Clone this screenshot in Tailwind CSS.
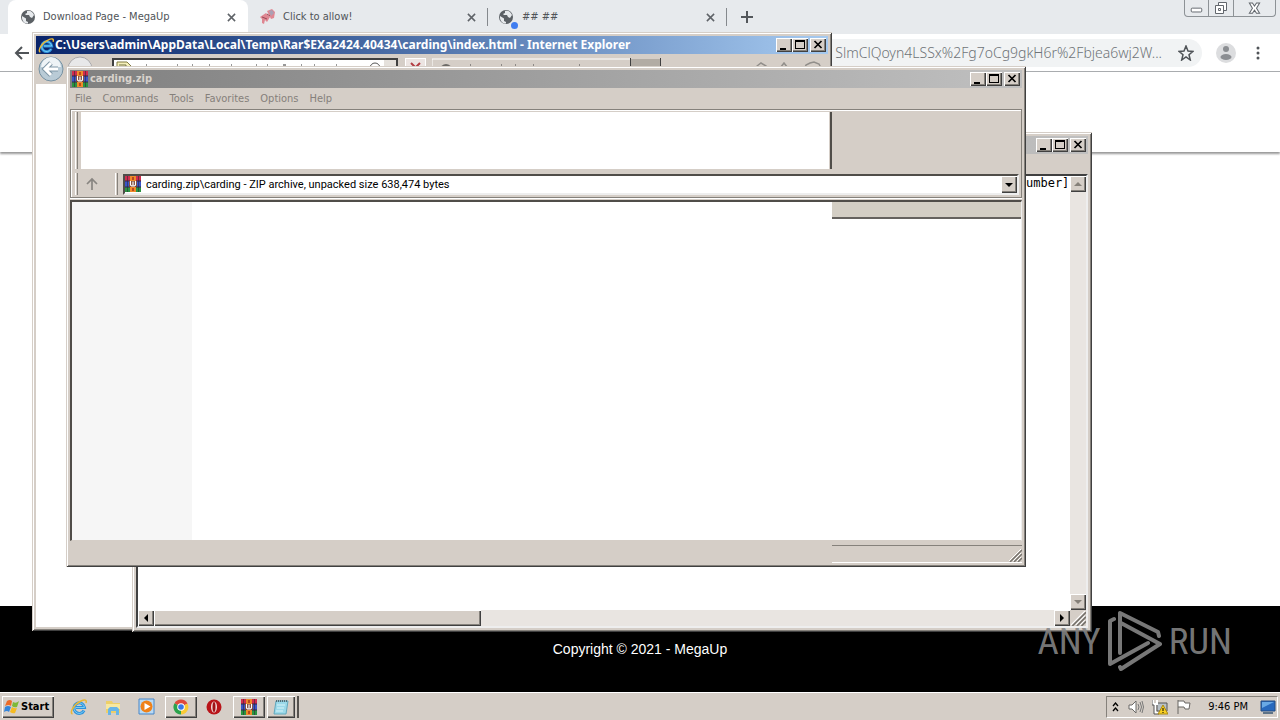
<!DOCTYPE html>
<html lang="en">
<head>
<meta charset="utf-8">
<title>Desktop</title>
<script src="https://cdn.jsdelivr.net/npm/@tailwindcss/browser@4"></script>
</head>
<body class="h-screen overflow-hidden bg-white font-['DejaVu_Sans_Condensed','DejaVu_Sans',sans-serif] text-[11px] leading-4 text-black">
<svg class="hidden" xmlns="http://www.w3.org/2000/svg">
  <symbol id="globe" viewBox="0 0 16 16"><circle cx="8" cy="8" r="7" fill="#5b6065"/><path d="M2 7l4 2.500V12l2 1v1.500C4 15 1.500 11 2 7zM7 2c3-1 6 1 7 4l-2 3-2-1-1-2H6l-1-1 2-1z" fill="#e7eaed"/></symbol>
  <symbol id="x" viewBox="0 0 10 10"><path d="M1 1l8 8M9 1L1 9" stroke="#5f6368" stroke-width="1.700"/></symbol>
  <symbol id="min" viewBox="0 0 16 14"><path d="M4 10h6v2H4z"/></symbol>
  <symbol id="max" viewBox="0 0 16 14"><path d="M3 2h10v9H3zM4 4v6h8V4z" fill-rule="evenodd"/></symbol>
  <symbol id="close" viewBox="0 0 16 14"><path d="M4.500 3l7 7M11.500 3l-7 7" stroke="#000" stroke-width="1.700"/></symbol>
  <symbol id="ie" viewBox="0 0 18 18"><path d="M14 12.500A5.300 5.300 0 1 1 14.500 9.500H6" fill="none" stroke="#2d91dc" stroke-width="3"/><path d="M14 12.500A5.300 5.300 0 1 1 14.500 9.500H6" fill="none" stroke="#79cff5" stroke-width="1"/><path d="M2.500 16C-1 15 4 6 11 3c4-2 6-1 5 2" fill="none" stroke="#e9b735" stroke-width="1.500"/></symbol>
  <symbol id="rar" viewBox="0 0 16 16"><path fill="#d02c4c" d="M0 0h16v5H0z"/><path fill="#3a55c8" d="M0 5h16v6H0z"/><path fill="#2a9440" d="M0 11h16v5H0z"/><path d="M0 5h5M11 5h5M0 11h5M11 11h5" stroke="#33294a"/><path fill="#f08a2a" d="M5 0h6v16H5z"/><path fill="#b8481f" d="M7 1h2v3H7zM7 12h2v3H7z"/><path fill="#7a4434" d="M4 5h8v6H4z"/><path d="M5.500 5v4l1 1h3l1-1V5M8 5.500v4" fill="none" stroke="#fff" stroke-width="1.200"/><path d="M2.500 0v16M13.500 0v16" stroke="#2c2538" stroke-opacity=".55"/></symbol>
  <symbol id="grip" viewBox="0 0 14 14"><path d="M1 13L13 1M5 13l8-8M9 13l4-4" stroke="#fff" stroke-width="1"/><path d="M2 14L14 2M6 14l8-8M10 14l4-4" stroke="#77736d" stroke-width="1.500"/></symbol>
</svg>

<div class="relative flex h-full flex-col">
  <!-- Browser tab strip -->
  <header class="flex h-[34px] shrink-0 bg-[#e7eaed] pl-2 text-[#505458]">
    <div class="flex w-60 items-center rounded-t-lg bg-white pr-3 pl-3">
      <svg class="size-4"><use href="#globe"/></svg><a href="#" class="ml-[7px] flex-1">Download Page - MegaUp</a>
      <button aria-label="Close tab" class="size-[9px]"><svg class="size-full"><use href="#x"/></svg></button>
    </div>
    <div class="flex w-[239px] items-center pr-[11px] pl-3">
      <svg class="size-4" viewBox="0 0 16 16"><path fill="#df8792" d="M0 8l6-4 4 4-3 5-2-2-1 4-2-1v-4zM7 2l5-2 3 3-1 6-3 1z"/><path fill="#aaa0b4" d="M9 2l3-1 2 3-3 3z"/><path d="M2 8l5 2M7 5l3 2" stroke="#9a4856"/></svg>
      <a href="#" class="ml-[7px] flex-1">Click to allow!</a>
      <button aria-label="Close tab" class="size-[9px]"><svg class="size-full"><use href="#x"/></svg></button>
    </div>
    <div class="my-2 flex w-[240px] items-center border-x border-[#85898d] pr-[11px] pl-[10px]">
      <div class="relative size-4"><svg class="size-4"><use href="#globe"/></svg><span class="absolute -right-1 -bottom-1 size-[7px] rounded-full bg-[#3f7df0]"></span></div>
      <a href="#" class="ml-2 flex-1">## ##</a>
      <button aria-label="Close tab" class="size-[9px]"><svg class="size-full"><use href="#x"/></svg></button>
    </div>
    <button aria-label="New tab" class="ml-[14px] w-3"><svg class="size-3" viewBox="0 0 12 12"><path d="M6 0v12M0 6h12" stroke="#53575b" stroke-width="2"/></svg></button>
    <div class="mr-[4px] ml-auto flex h-[17px] rounded-b border border-t-0 border-[#8d9296]">
      <button aria-label="Minimize" class="w-6 border-r border-[#8d9296]"><svg viewBox="0 0 24 16"><rect x="6.500" y="8.500" width="11" height="4" rx="1" fill="#fff" stroke="#62676d"/></svg></button>
      <button aria-label="Restore" class="w-[25px] border-r border-[#8d9296]"><svg viewBox="0 0 24 16"><path d="M9.500 5V2.500h8v8H15M6.500 5.500h8v8h-8zM9.500 8.500h2v2h-2z" fill="#fff" stroke="#62676d"/></svg></button>
      <button aria-label="Close" class="w-[41px]"><svg viewBox="0 0 40 16"><path d="M15 3h3l2 3 2-3h3l-3 5 3 5h-3l-2-3-2 3h-3l3-5z" fill="#fff" stroke="#62676d"/></svg></button>
    </div>
  </header>
  <!-- Address bar -->
  <div class="flex h-[38px] shrink-0 items-center border-b border-[#a9acaf] bg-white px-[14px]">
    <button aria-label="Back" class="size-4"><svg viewBox="0 0 16 16"><path d="M15 8H2M8 2L2 8l6 6" fill="none" stroke="#505458" stroke-width="2"/></svg></button>
    <div class="ml-4 flex h-[28px] flex-1 items-center rounded-full bg-[#f1f3f4] pr-[8px]">
      <input aria-label="Address" class="min-w-0 flex-1 bg-transparent text-right font-['Noto_Sans',sans-serif] text-[14px] font-light text-[#6f7478]" value="SlmClQoyn4LSSx%2Fg7oCg9gkH6r%2Fbjea6wj2W...">
      <button aria-label="Bookmark" class="ml-4 size-4"><svg viewBox="0 0 16 16"><path d="M8 1l2 5 5 .4-4 3.300L12.300 15 8 12l-4.300 3L5 9.700 1 6.400 6 6z" fill="none" stroke="#505458" stroke-width="1.500"/></svg></button>
    </div>
    <button aria-label="Profile" class="ml-[14px] size-5"><svg viewBox="0 0 20 20"><circle cx="10" cy="10" r="10" fill="#dcdddf"/><circle cx="10" cy="6" r="3" fill="#8b8e92"/><ellipse cx="10" cy="14" rx="5.500" ry="3" fill="#8b8e92"/></svg></button>
    <button aria-label="Menu" class="ml-[14px] flex w-4 justify-center"><svg class="h-4 w-1" viewBox="0 0 4 16"><circle cx="2" cy="3" r="1.500" fill="#505458"/><circle cx="2" cy="8" r="1.500" fill="#505458"/><circle cx="2" cy="13" r="1.500" fill="#505458"/></svg></button>
  </div>
  <!-- Web page -->
  <main class="flex min-h-0 flex-1 flex-col">
    <div class="h-20 shrink-0 bg-white shadow-[0_2px_2px_#999]"></div>
    <footer class="mt-auto h-[86px] bg-black text-center font-['Liberation_Sans',sans-serif] text-[14px] leading-[86px] text-white">Copyright © 2021 - MegaUp</footer>
  </main>

  <!-- Internet Explorer window -->
  <section class="absolute top-8 left-8 flex h-[599px] w-[800px] flex-col bg-[#d5cec7] p-1 shadow-[inset_1px_1px_0_#d5cec7,inset_-1px_-1px_0_#404040,inset_2px_2px_0_#fff,inset_-2px_-2px_0_#85817b]">
    <div class="flex h-[18px] shrink-0 items-center bg-linear-to-r from-[#0a246a] to-[#a6caf0] pr-[2px] pl-[2px] text-white">
      <svg class="size-[17px]"><use href="#ie"/></svg><h2 class="flex-1 font-['Noto_Sans',sans-serif] text-[12px] font-bold whitespace-nowrap">C:\Users\admin\AppData\Local\Temp\Rar$EXa2424.40434\carding\index.html - Internet Explorer</h2>
      <button aria-label="Minimize" class="h-[14px] w-4 bg-[#d5cec7] shadow-[inset_1px_1px_0_#fff,inset_-1px_-1px_0_#404040,inset_-2px_-2px_0_#85817b]"><svg viewBox="0 0 16 14"><use href="#min"/></svg></button>
      <button aria-label="Maximize" class="h-[14px] w-4 bg-[#d5cec7] shadow-[inset_1px_1px_0_#fff,inset_-1px_-1px_0_#404040,inset_-2px_-2px_0_#85817b]"><svg viewBox="0 0 16 14"><use href="#max"/></svg></button>
      <button aria-label="Close" class="ml-[2px] h-[14px] w-4 bg-[#d5cec7] shadow-[inset_1px_1px_0_#fff,inset_-1px_-1px_0_#404040,inset_-2px_-2px_0_#85817b]"><svg viewBox="0 0 16 14"><use href="#close"/></svg></button>
    </div>
    <div class="flex h-[30px] shrink-0 items-start pl-[2px]">
      <svg class="mt-[2px] h-7 w-[74px]" viewBox="0 0 74 28"><circle cx="42" cy="13" r="12" fill="#e8e8e9" stroke="#aaa9ab"/><circle cx="13" cy="13" r="12" fill="#b9cbd6" stroke="#7691a2"/><path d="M3 11a10 10 0 0 1 20 0z" fill="#eef3f6"/><path d="M20 13H7M13 7l-6 6 6 6" fill="none" stroke="#7d95a5" stroke-width="5"/><path d="M20 13H7M13 7l-6 6 6 6" fill="none" stroke="#fff" stroke-width="3"/></svg>
      <div class="mt-1 flex h-6 w-[286px] border-2 border-[#404040] bg-white"><svg class="size-full" viewBox="0 0 282 20" preserveAspectRatio="none"><path d="M3 2h10l4 4v12H3z" fill="#f4efb9" stroke="#817a42"/><path d="M5 5h7v3h5" fill="none" stroke="#716e45"/><path d="M32 5h1M63 5h1M78 5h1M95 5h1M117 5h1M142 5h1M153 5h1M169 5h3M187 5h1M200 5h1M222 5h1" stroke="#333"/><circle cx="261" cy="8" r="5" fill="none" stroke="#555"/><path d="M270 0h12v20h-12z" fill="#e5e1dc"/></svg></div>
      <div class="mt-1 ml-[7px] h-6 w-[21px] border border-white bg-[#ece5e2]"><svg viewBox="0 0 19 20"><path d="M5 4l9 9M14 4l-9 9" stroke="#b33e43" stroke-width="2"/></svg></div>
      <svg class="mt-1 ml-[6px] h-6 w-[230px]" viewBox="0 0 230 24"><path d="M0 24V1h198" fill="none" stroke="#fff"/><path d="M198.500 0v24M228.500 0v24" stroke="#404040"/><path d="M199 1h29v23h-29z" fill="#b2aca4"/><circle cx="14" cy="12" r="6" fill="#6d6b68"/><path d="M38 7h1M69 7h1M83 7h1M101 7h1M147 7h1" stroke="#444"/></svg>
      <svg class="mt-1 ml-[92px] h-6 w-[70px]" viewBox="0 0 70 24"><path d="M3 14V8l4-3 5 3v6M23 14l7-9 7 9M50 12l2-5 4-2 4-1 5 2 3 6" fill="none" stroke="#918e8a" stroke-width="1.500"/></svg>
    </div>
    <div class="flex-1 bg-white"></div>
  </section>

  <!-- Notepad window -->
  <section class="absolute top-[132px] left-[132px] flex h-[500px] w-[960px] flex-col bg-[#d5cec7] p-1 shadow-[inset_1px_1px_0_#d5cec7,inset_-1px_-1px_0_#404040,inset_2px_2px_0_#fff,inset_-2px_-2px_0_#85817b]">
    <div class="flex h-[18px] shrink-0 items-center justify-end bg-linear-to-r from-[#808080] to-[#c0c0c0] pr-[2px]">
      <button aria-label="Minimize" class="h-[14px] w-4 bg-[#d5cec7] shadow-[inset_1px_1px_0_#fff,inset_-1px_-1px_0_#404040,inset_-2px_-2px_0_#85817b]"><svg viewBox="0 0 16 14"><use href="#min"/></svg></button>
      <button aria-label="Maximize" class="h-[14px] w-4 bg-[#d5cec7] shadow-[inset_1px_1px_0_#fff,inset_-1px_-1px_0_#404040,inset_-2px_-2px_0_#85817b]"><svg viewBox="0 0 16 14"><use href="#max"/></svg></button>
      <button aria-label="Close" class="ml-[2px] h-[14px] w-4 bg-[#d5cec7] shadow-[inset_1px_1px_0_#fff,inset_-1px_-1px_0_#404040,inset_-2px_-2px_0_#85817b]"><svg viewBox="0 0 16 14"><use href="#close"/></svg></button>
    </div>
    <div class="mt-5 flex min-h-0 flex-1 flex-col border-2 border-t-[#404040] border-r-[#eee] border-b-[#eee] border-l-[#404040] bg-white">
      <div class="flex min-h-0 flex-1">
        <textarea aria-label="Text" class="min-w-0 flex-1 resize-none overflow-hidden bg-white pl-[888px] font-['DejaVu_Sans_Mono',monospace] text-[12px] leading-[14px] whitespace-pre">umber]</textarea>
        <div class="flex w-4 flex-col justify-between bg-[#e9e5e1]">
          <button aria-label="Scroll up" class="size-4 bg-[#d5cec7] shadow-[inset_1px_1px_0_#fff,inset_-1px_-1px_0_#404040,inset_-2px_-2px_0_#85817b]"><svg viewBox="0 0 16 16"><path d="M4 10h8L8 6z" fill="#858079"/></svg></button>
          <button aria-label="Scroll down" class="size-4 bg-[#d5cec7] shadow-[inset_1px_1px_0_#fff,inset_-1px_-1px_0_#404040,inset_-2px_-2px_0_#85817b]"><svg viewBox="0 0 16 16"><path d="M4 6h8l-4 4z" fill="#858079"/></svg></button>
        </div>
      </div>
      <div class="flex h-4 bg-[#e9e5e1]">
        <button aria-label="Scroll left" class="size-4 bg-[#d5cec7] shadow-[inset_1px_1px_0_#fff,inset_-1px_-1px_0_#404040,inset_-2px_-2px_0_#85817b]"><svg viewBox="0 0 16 16"><path d="M10 4v8L6 8z"/></svg></button>
        <div class="w-[327px] bg-[#d5cec7] shadow-[inset_1px_1px_0_#fff,inset_-1px_-1px_0_#404040,inset_-2px_-2px_0_#85817b]"></div>
        <button aria-label="Scroll right" class="ml-auto size-4 bg-[#d5cec7] shadow-[inset_1px_1px_0_#fff,inset_-1px_-1px_0_#404040,inset_-2px_-2px_0_#85817b]"><svg viewBox="0 0 16 16"><path d="M6 4v8l4-4z"/></svg></button>
        <svg class="size-4 bg-[#d5cec7]"><use href="#grip"/></svg>
      </div>
    </div>
  </section>

  <!-- WinRAR window -->
  <section class="absolute top-[66px] left-[66px] flex h-[501px] w-[960px] flex-col bg-[#d5cec7] p-1 shadow-[inset_1px_1px_0_#d5cec7,inset_-1px_-1px_0_#404040,inset_2px_2px_0_#fff,inset_-2px_-2px_0_#85817b]">
    <div class="flex h-[18px] shrink-0 items-center bg-linear-to-r from-[#808080] to-[#c0c0c0] pr-[2px] pl-[2px] text-[#d9d3cd]">
      <svg class="size-4"><use href="#rar"/></svg><h2 class="ml-[2px] flex-1 font-bold">carding.zip</h2>
      <button aria-label="Minimize" class="h-[14px] w-4 bg-[#d5cec7] shadow-[inset_1px_1px_0_#fff,inset_-1px_-1px_0_#404040,inset_-2px_-2px_0_#85817b]"><svg viewBox="0 0 16 14"><use href="#min"/></svg></button>
      <button aria-label="Maximize" class="h-[14px] w-4 bg-[#d5cec7] shadow-[inset_1px_1px_0_#fff,inset_-1px_-1px_0_#404040,inset_-2px_-2px_0_#85817b]"><svg viewBox="0 0 16 14"><use href="#max"/></svg></button>
      <button aria-label="Close" class="ml-[2px] h-[14px] w-4 bg-[#d5cec7] shadow-[inset_1px_1px_0_#fff,inset_-1px_-1px_0_#404040,inset_-2px_-2px_0_#85817b]"><svg viewBox="0 0 16 14"><use href="#close"/></svg></button>
    </div>
    <nav class="flex h-[21px] shrink-0 items-center gap-[11px] pt-px pl-[5px] text-[#85807b]"><button>File</button><button>Commands</button><button>Tools</button><button>Favorites</button><button>Options</button><button>Help</button></nav>
    <div class="flex h-[89px] shrink-0 flex-col border border-[#85817b] p-[2px] shadow-[inset_1px_1px_0_#fff,0_1px_0_#fff]">
      <div class="flex h-[57px] pl-[2px]">
        <div class="w-[3px] border-r border-l border-r-[#85817b] border-l-white"></div>
        <div class="ml-[3px] w-[748px] bg-white"></div><div class="w-[3px] border-r-2 border-[#504d49]"></div>
      </div>
      <div class="mt-1 flex h-[22px] items-center pl-[2px]">
        <div class="h-full w-[3px] border-r border-l border-r-[#85817b] border-l-white"></div>
        <button aria-label="Up one level" class="ml-[7px] size-[14px]"><svg viewBox="0 0 14 14"><path d="M7 13V2M2 7l5-5 5 5" fill="none" stroke="#888581" stroke-width="1.700"/></svg></button>
        <div class="ml-[16px] h-full w-[3px] border-r border-l border-r-[#85817b] border-l-white"></div>
        <div class="ml-[5px] flex h-[21px] flex-1 items-center border-2 border-t-[#504d49] border-r-[#eee] border-b-[#eee] border-l-[#504d49] bg-white">
          <svg class="size-4"><use href="#rar"/></svg>
          <select aria-label="Archive path" class="ml-[5px] h-[17px] flex-1 appearance-none bg-white pt-px font-['Roboto',sans-serif]"><option>carding.zip\carding - ZIP archive, unpacked size 638,474 bytes</option></select>
          <svg class="h-[17px] w-4 bg-[#d5cec7] shadow-[inset_1px_1px_0_#fff,inset_-1px_-1px_0_#404040,inset_-2px_-2px_0_#85817b]" viewBox="0 0 16 17"><path d="M4 7h8l-4 4z"/></svg>
        </div>
      </div>
    </div>
    <div class="mt-[2px] flex min-h-0 flex-1 border-t-2 border-r border-b border-l-2 border-t-[#504d49] border-r-[#eee] border-b-[#d5cec7] border-l-[#504d49] bg-white">
      <div class="w-[120px] bg-[#f6f6f6]"></div>
      <div class="ml-auto h-[17px] w-[189px] border-b-2 border-[#65625e] bg-[#d3cec4]"></div>
    </div>
    <div class="mt-1 flex h-[18px] shrink-0 justify-end">
      <div class="flex w-[190px] items-end justify-end border-t border-b border-t-[#85817b] border-b-white"><svg class="size-[14px]"><use href="#grip"/></svg></div>
    </div>
  </section>

  <!-- Watermark over the desktop -->
  <div class="absolute right-[48px] bottom-[47px] flex h-[64px] items-center gap-[7px] font-['Roboto_Condensed',sans-serif] text-[37px] leading-none text-[#858585]/90">
    <span>ANY</span>
    <svg class="h-[62px] w-[54px]" viewBox="0 0 54 62" fill="none" stroke="currentColor" stroke-width="4" stroke-linecap="round" stroke-linejoin="round"><path d="M51 26L50 22 12 3V43M6 9L2 11V54L40 33M12 57l1 2L52 34 13 13"/></svg>
    <span>RUN</span>
  </div>

  <!-- Taskbar -->
  <nav class="relative flex h-7 shrink-0 items-center border-t border-white bg-[#d5cec7] pr-[2px] pl-[2px]">
    <button class="flex h-[22px] w-[52px] items-center gap-[1px] pl-[2px] font-bold shadow-[inset_1px_1px_0_#fff,inset_-1px_-1px_0_#404040,inset_-2px_-2px_0_#85817b]">
      <svg class="size-4 shrink-0" viewBox="0 0 16 16"><path d="M3 2q3-2 5 0L7 7Q5 5 1 7z" fill="#ed6b27"/><path d="M9 3q3 2 6-1l-2 6q-3 1-5-1z" fill="#7db937"/><path d="M1 8q3-2 6 0l-2 5q-2-2-5 0z" fill="#3585da"/><path d="M8 8q3 2 5 1l-2 5q-2 1-5-1z" fill="#f5bb22"/></svg>Start</button>
    <button aria-label="Internet Explorer" class="ml-4 size-[18px]"><svg class="size-full"><use href="#ie"/></svg></button>
    <button aria-label="Explorer" class="ml-4 size-[18px]"><svg viewBox="0 0 18 18"><path d="M2 3h6l1 2h7v10H2z" fill="#edcf68"/><path d="M2 6h14v5H2z" fill="#f7e8a0"/><path d="M4 17v-6l2-2h7l2 2v6h-3v-4H7v4z" fill="#68b5e7"/></svg></button>
    <button aria-label="Media Player" class="ml-4 size-[17px]"><svg viewBox="0 0 17 17"><path d="M1 1h15v15H1z" fill="#b9daf4" stroke="#4686c8"/><circle cx="8.500" cy="8.500" r="6" fill="#ef8118"/><path d="M6.500 5v7l6-3.500z" fill="#fff"/></svg></button>
    <button aria-label="Chrome" class="ml-[10px] flex h-[22px] w-8 items-center justify-center shadow-[inset_1px_1px_0_#fff,inset_-1px_-1px_0_#404040,inset_-2px_-2px_0_#85817b]"><svg class="size-4" viewBox="0 0 16 16"><path d="M8 8L1.500 4.200A7.500 7.500 0 0 1 14.500 4.500z" fill="#df493b"/><path d="M8 8L1.500 4.200A7.500 7.500 0 0 0 8 15.500L11 9z" fill="#2ba24c"/><path d="M8 8l6.500-3.500A7.500 7.500 0 0 1 8 15.500z" fill="#f9ca34"/><circle cx="8" cy="8" r="3.800" fill="#fff"/><circle cx="8" cy="8" r="2.800" fill="#3978e7"/></svg></button>
    <button aria-label="Opera" class="ml-[9px] size-4"><svg viewBox="0 0 16 16"><circle cx="8" cy="8" r="7.500" fill="#b91419"/><ellipse cx="8" cy="8" rx="3" ry="5.500" fill="#f3dcdc"/><ellipse cx="8" cy="8" rx="1.500" ry="5" fill="#9f1115"/></svg></button>
    <button aria-label="WinRAR" class="ml-[11px] flex h-[22px] w-8 items-center justify-center shadow-[inset_1px_1px_0_#fff,inset_-1px_-1px_0_#404040,inset_-2px_-2px_0_#85817b]"><svg class="size-4"><use href="#rar"/></svg></button>
    <button aria-label="Notepad" class="ml-[2px] flex h-[22px] w-7 items-center justify-center shadow-[inset_1px_1px_0_#fff,inset_-1px_-1px_0_#404040,inset_-2px_-2px_0_#85817b]"><svg class="size-4" viewBox="0 0 16 16"><path d="M3 2h12l-2 13H1z" fill="#9bd9e9" stroke="#62a8bd"/><path d="M3 2h12" stroke="#536d75" stroke-width="2" stroke-dasharray="1 1"/><path d="M4 6h8M4 9h7M3 12h7" stroke="#d8f3f8"/></svg></button>
    <div class="h-[22px] w-1 border-r-2 border-[#55524e]"></div>
    <div class="ml-auto flex h-[22px] w-[172px] items-center border border-t-[#85817b] border-r-white border-b-white border-l-[#85817b] pl-[5px]">
      <button aria-label="Show hidden icons" class="w-[7px]"><svg viewBox="0 0 7 10"><path d="M1 4l2.500-3L6 4M1 9l2.500-3L6 9" fill="none" stroke="#000" stroke-width="1.300"/></svg></button>
      <svg class="ml-[9px] size-4" viewBox="0 0 16 16"><path d="M1 6h3l4-4v12l-4-4H1z" fill="#fff" stroke="#6b6966"/><path d="M10 5q2 3 0 6M12 3q3 5 0 10M14 2q3 6 0 12" fill="none" stroke="#777"/></svg>
      <svg class="ml-2 size-4" viewBox="0 0 16 16"><path d="M5 4h10v8H5z" fill="#b9c0c6" stroke="#555"/><path d="M1 1v4h4V1M3 5v9h4" fill="none" stroke="#fff" stroke-width="2"/><path d="M0 1v5h2v9h5" fill="none" stroke="#555"/><path d="M11 6l5 9H6z" fill="#f8cf22" stroke="#a98812"/><path d="M11 9v3M11 13v1" stroke="#000"/></svg>
      <svg class="ml-2 size-4" viewBox="0 0 16 16"><path d="M2 1v14M2 2h6l1 2h5l-1 6H9L8 8H2" fill="#fff" stroke="#696663"/></svg>
      <time class="ml-auto">9:46 PM</time>
      <svg class="mr-[1px] ml-3 size-4" viewBox="0 0 16 16"><path d="M1 2h14v10H1z" fill="#2869bd" stroke="#254c80"/><path d="M2 3h12L2 9z" fill="#69a9e5"/><path d="M3 14h10" stroke="#5f7488" stroke-width="2"/></svg>
    </div>
  </nav>
</div>
</body>
</html>
